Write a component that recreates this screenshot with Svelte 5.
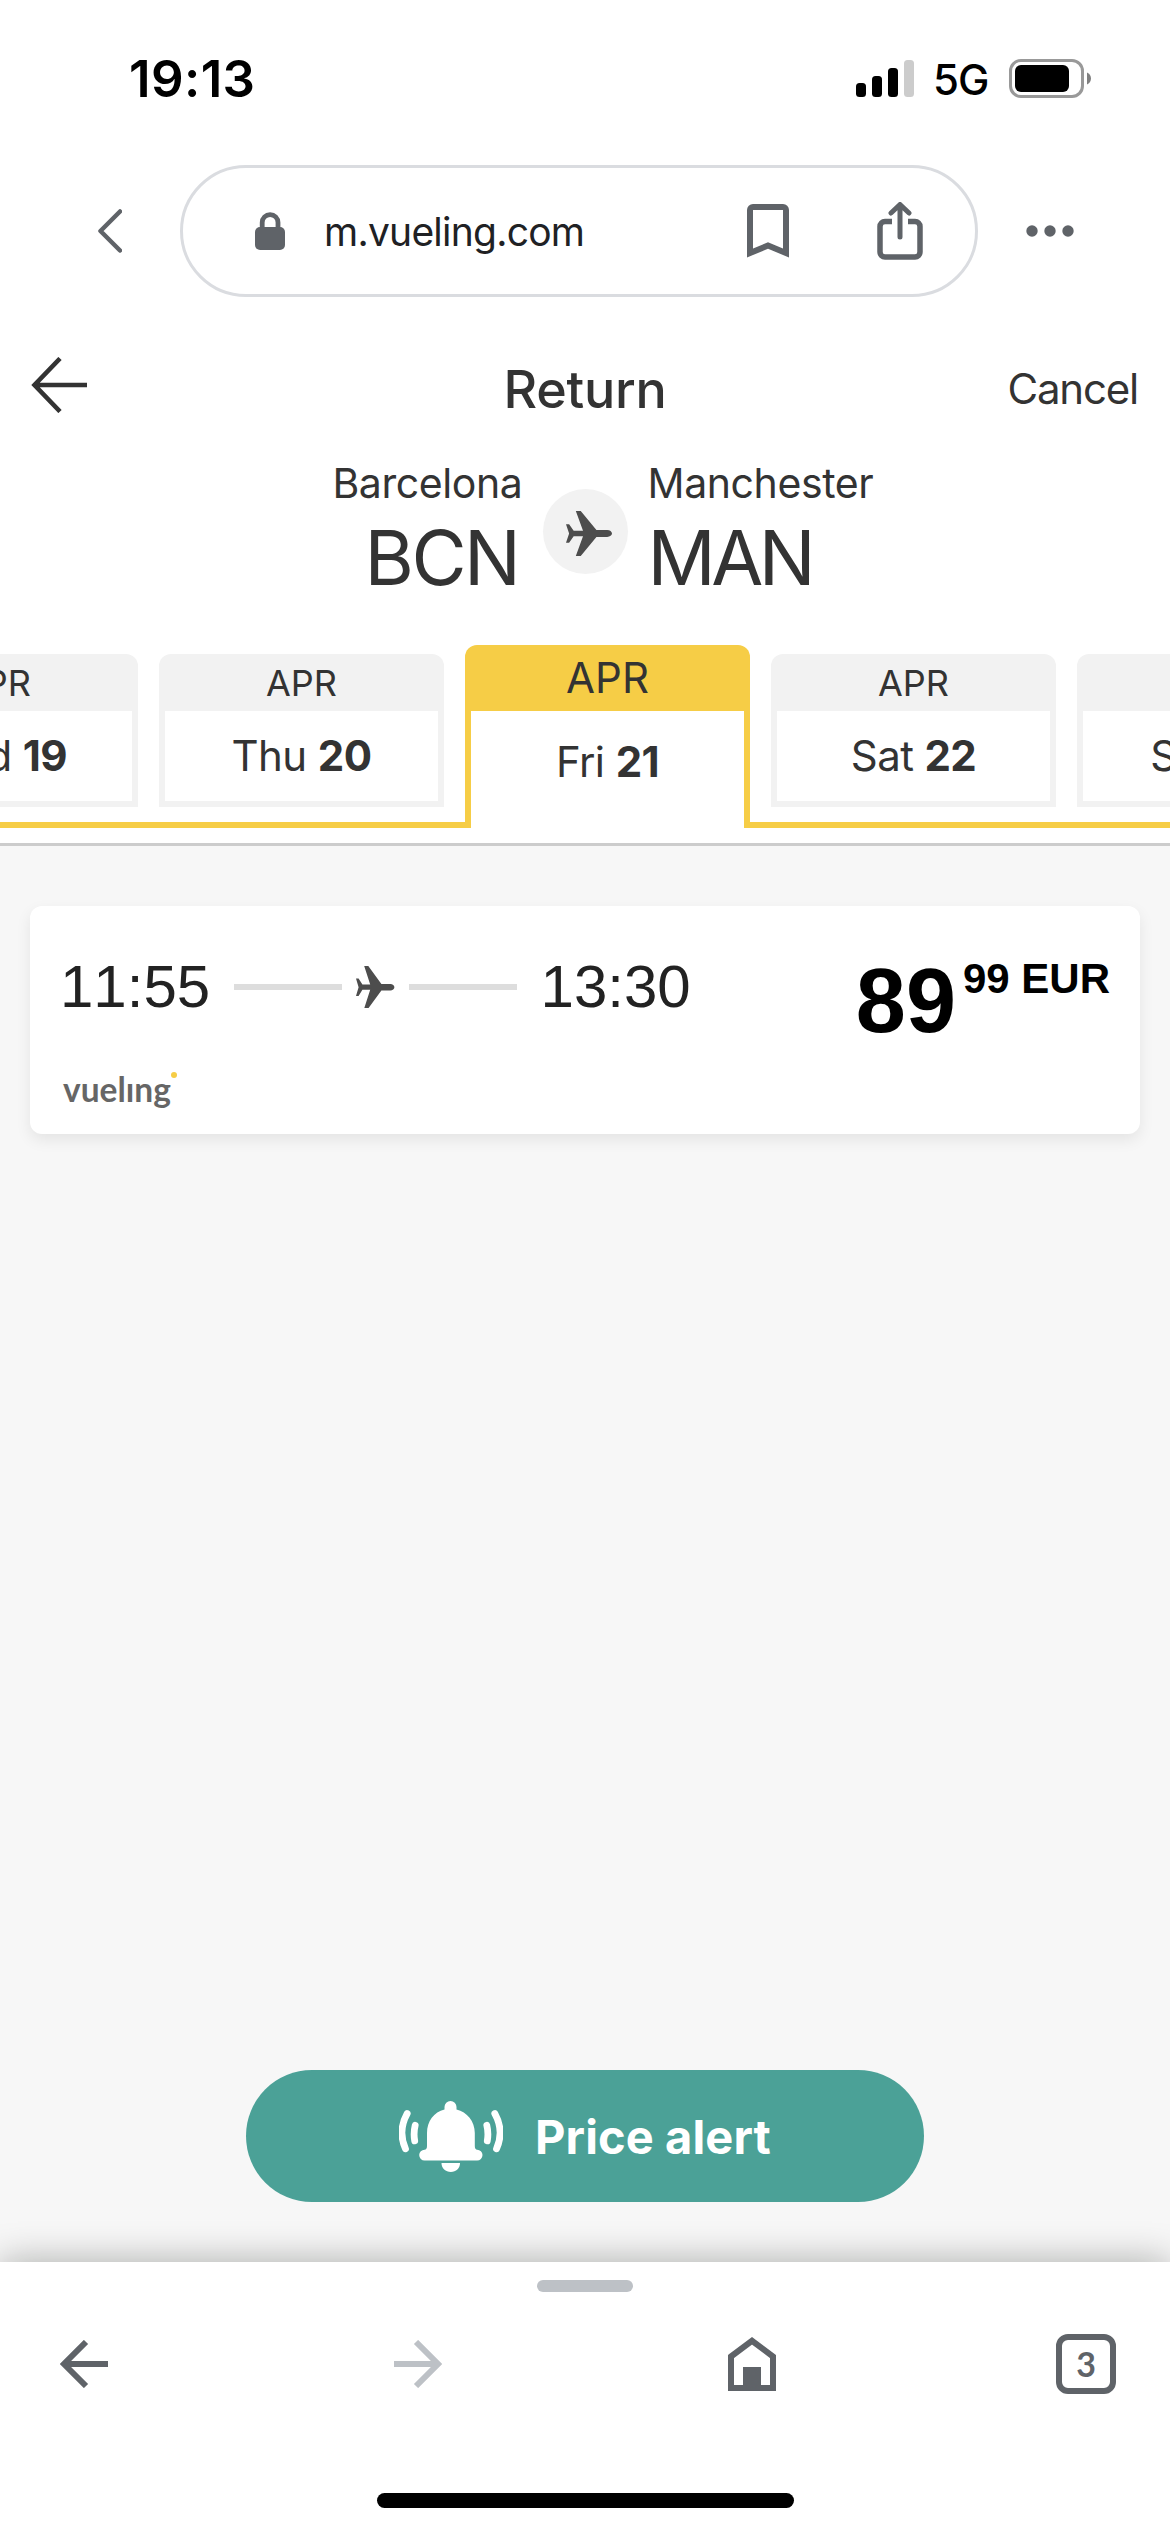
<script lang="ts">
	interface Day {
		month: string;
		weekday: string;
		date: number;
	}

	const days: Day[] = [
		{ month: 'APR', weekday: 'Wed', date: 19 },
		{ month: 'APR', weekday: 'Thu', date: 20 },
		{ month: 'APR', weekday: 'Fri', date: 21 },
		{ month: 'APR', weekday: 'Sat', date: 22 },
		{ month: 'APR', weekday: 'Sun', date: 23 }
	];

	let selected = $state(2);

	const flight = { departs: '11:55', arrives: '13:30', price: '89', cents: '99', currency: 'EUR' };
</script>

{#snippet plane()}
	<svg class="plane" viewBox="0 0 38.4 42.4" preserveAspectRatio="none">
		<path
			d="M8.2 0h4.1L25.4 18h9c2.2 0 4 1.6 4 3.2s-1.8 3.2-4 3.2h-9L12.3 42.4H8.2l6-18.6H6.4L2.6 30H0l2.6-8.8L0 12.4h2.6l3.8 6.2h7.8z"
		/>
	</svg>
{/snippet}

<div class="screen">
	<div class="status-bar">
		<span class="time">19:13</span>
		<div class="status-icons">
			<svg width="58" height="37" viewBox="0 0 58 37">
				<rect x="0" y="23" width="10" height="14" rx="3.5" />
				<rect x="16" y="16" width="10" height="21" rx="3.5" />
				<rect x="32" y="8" width="10" height="29" rx="3.5" />
				<rect x="48" y="0" width="10" height="37" rx="3.5" fill="#ccc" />
			</svg>
			<span class="network">5G</span>
			<svg width="82" height="39" viewBox="0 0 82 39">
				<rect x="1.5" y="1.5" width="72" height="36" rx="10.5" fill="none" stroke="#999" stroke-width="3" />
				<rect x="6" y="6" width="54" height="27" rx="6" />
				<path d="M78 13.5c2.3 1 4 3.3 4 6s-1.7 5-4 6z" fill="#808080" />
			</svg>
		</div>
	</div>

	<div class="browser-bar">
		<button class="chevron" aria-label="Back">
			<svg width="24" height="44" viewBox="0 0 24 44" fill="none" stroke="#5f6368" stroke-width="4.5" stroke-linecap="round" stroke-linejoin="round">
				<path d="M22 2.5L2.5 22 22 41.5" />
			</svg>
		</button>
		<div class="address">
			<svg width="30" height="38" viewBox="0 0 30 38">
				<path d="M7.2 18V10.5a7.9 7.9 0 0 1 15.8 0V18" fill="none" stroke="#5f6368" stroke-width="4.8" />
				<rect y="15" width="30" height="23" rx="5" fill="#5f6368" />
			</svg>
			<span class="url">m.vueling.com</span>
			<svg class="bookmark" width="42" height="54" viewBox="0 0 42 54" fill="none" stroke="#5f6368" stroke-width="6">
				<path d="M3 49V6a3 3 0 0 1 3-3h30a3 3 0 0 1 3 3v43L21 41.5z" />
			</svg>
			<svg width="46" height="58" viewBox="0 0 46 58" fill="none" stroke="#5f6368" stroke-width="5.5">
				<path d="M15 19.5H8a5 5 0 0 0-5 5V50a5 5 0 0 0 5 5h30a5 5 0 0 0 5-5V24.5a5 5 0 0 0-5-5h-7" />
				<path d="M23 35V3.5M14 11l9-8.5 9 8.5" stroke-width="5" stroke-linecap="round" stroke-linejoin="round" />
			</svg>
		</div>
		<button class="more" aria-label="More">
			<svg width="48" height="12" viewBox="0 0 48 12" fill="#5f6368">
				<circle cx="6" cy="6" r="5.7" />
				<circle cx="24" cy="6" r="5.7" />
				<circle cx="42" cy="6" r="5.7" />
			</svg>
		</button>
	</div>

	<header class="page-header">
		<button class="go-back" aria-label="Go back">
			<svg width="57" height="56" viewBox="0 0 57 56" fill="none" stroke="#333" stroke-width="4.6">
				<path d="M56 28H4M29 1.5L3.5 28 29 54.5" />
			</svg>
		</button>
		<h1>Return</h1>
		<button class="cancel">Cancel</button>
	</header>

	<section class="route">
		<div class="place from">
			<span class="city">Barcelona</span>
			<span class="code">BCN</span>
		</div>
		<div class="route-icon">{@render plane()}</div>
		<div class="place">
			<span class="city">Manchester</span>
			<span class="code">MAN</span>
		</div>
	</section>

	<nav class="days">
		<div class="days-track">
			{#each days as day, i}
				<button
					class="day"
					class:active={i === selected}
					class:after={i > selected}
					onclick={() => (selected = i)}
				>
					<span class="month">{day.month}</span>
					<span class="date">{day.weekday}&nbsp;<b>{day.date}</b></span>
				</button>
			{/each}
		</div>
	</nav>

	<main class="results">
		<article class="flight">
			<div class="journey">
				<div class="times">
					<span>{flight.departs}</span>
					<i class="line"></i>
					{@render plane()}
					<i class="line"></i>
					<span>{flight.arrives}</span>
				</div>
				<span class="airline">vuelıng</span>
			</div>
			<div class="price">
				<span class="amount">{flight.price}</span>
				<span class="cents">{flight.cents} {flight.currency}</span>
			</div>
		</article>

		<button class="price-alert">
			<svg width="104" height="71" viewBox="0 0 104 71" fill="#fff">
				<path
					d="M45.5 8.6V6a6 6 0 0 1 12 0v2.6C68 11 75.8 20.5 75.8 32v13c0 2.5 1 3.7 2.3 3.7a5.4 5.4 0 0 1 0 10.8H25.6a5.4 5.4 0 0 1 0-10.8C27 48.7 28 47.5 28 45V32c0-11.5 7-21 17.5-23.4z"
				/>
				<path d="M42.5 62H61c0 5.5-4 9-9.2 9s-9.3-3.5-9.3-9z" />
				<g fill="none" stroke="#fff" stroke-width="6.8" stroke-linecap="round">
					<path d="M8.2 12.5Q-1.5 30 6.5 47.8M16.2 24.2Q14.3 32 15.7 39.8" />
					<path d="M95.8 12.5Q105.5 30 97.5 47.8M87.8 24.2Q89.7 32 88.3 39.8" />
				</g>
			</svg>
			<span>Price alert</span>
		</button>
	</main>

	<footer class="toolbar">
		<div class="handle"></div>
		<div class="toolbar-icons">
			<svg width="48" height="48" viewBox="0 0 48 48" fill="none" stroke="#5f6368" stroke-width="6">
				<path d="M48 24H5M26 2L4 24l22 22" />
			</svg>
			<svg width="48" height="48" viewBox="0 0 48 48" fill="none" stroke="#bdc1c6" stroke-width="6">
				<path d="M0 24h43M22 2l22 22-22 22" />
			</svg>
			<svg width="48" height="54" viewBox="0 0 48 54">
				<path d="M3 19.5L24 3.8l21 15.7V51H3z" fill="none" stroke="#5f6368" stroke-width="6" />
				<path d="M15 30h18v24H15z" fill="#5f6368" />
			</svg>
			<span class="tab-count">3</span>
		</div>
		<div class="home-indicator"></div>
	</footer>
</div>

<style>
	:global(body) {
		margin: 0;
		background: #fff;
	}

	.screen {
		display: flex;
		flex-direction: column;
		width: 1170px;
		height: 2532px;
		overflow: hidden;
		background: #fff;
		color: #333;
		font-family: Inter, 'Liberation Sans', sans-serif;
	}

	button {
		padding: 0;
		border: 0;
		background: none;
		color: inherit;
		font: inherit;
	}

	svg {
		display: block;
		flex: none;
	}

	.status-bar {
		display: flex;
		align-items: center;
		justify-content: space-between;
		height: 156px;
		padding: 0 79px 0 129px;
		box-sizing: border-box;
		color: #000;
	}

	.time {
		font-size: 51px;
		font-weight: 600;
		letter-spacing: 0.4px;
	}

	.status-icons {
		display: flex;
		align-items: center;
	}

	.network {
		width: 54px;
		margin: 2px 22px 0 19px;
		font-size: 42px;
		font-weight: 500;
		letter-spacing: -1px;
	}

	.browser-bar {
		display: flex;
		align-items: center;
		height: 150px;
	}

	.chevron {
		padding-left: 98px;
		width: 180px;
		box-sizing: border-box;
	}

	.address {
		display: flex;
		align-items: center;
		width: 798px;
		height: 132px;
		padding: 0 52px 0 72px;
		box-sizing: border-box;
		border: 3px solid #dadce0;
		border-radius: 66px;
	}

	.url {
		flex: 1;
		margin-left: 39px;
		color: #202124;
		font-size: 39px;
		letter-spacing: -0.75px;
	}

	.bookmark {
		margin-right: 88px;
	}

	.more {
		margin-left: 48px;
	}

	.page-header {
		display: grid;
		grid-template-columns: 1fr auto 1fr;
		align-items: center;
		height: 144px;
		padding: 22px 31px 0;
		box-sizing: border-box;
	}

	.go-back {
		justify-self: start;
		margin-bottom: 8px;
	}

	h1 {
		margin: 0;
		font-size: 52px;
		font-weight: 500;
		letter-spacing: -0.3px;
	}

	.cancel {
		justify-self: end;
		margin: 0 1px 2px 0;
		font-size: 42px;
		letter-spacing: -1.2px;
	}

	.route {
		display: grid;
		grid-template-columns: 1fr 85px 1fr;
		column-gap: 20px;
		height: 195px;
	}

	.place {
		display: flex;
		flex-direction: column;
	}

	.from {
		align-items: flex-end;
	}

	.city {
		font-size: 41px;
		line-height: 66px;
		letter-spacing: -0.4px;
	}

	.code {
		font-size: 75.5px;
		line-height: 84px;
		letter-spacing: -4.5px;
	}

	.from .code {
		margin-right: 4px;
		letter-spacing: -2.5px;
	}

	.route-icon {
		display: flex;
		align-items: center;
		justify-content: center;
		height: 85px;
		margin-top: 39px;
		border-radius: 50%;
		background: #f2f2f2;
	}

	.plane {
		width: 38.4px;
		height: 42.4px;
		fill: #4d4d4d;
	}

	.route-icon .plane {
		width: 46px;
		height: 45px;
		margin: 4px 0 0 8px;
	}

	.days {
		height: 198px;
		overflow: hidden;
		border-bottom: 3px solid #ccc;
	}

	.days-track {
		display: flex;
		width: max-content;
		height: 183px;
		margin-left: -147px;
	}

	.day {
		display: flex;
		flex-direction: column;
		width: 306px;
		padding: 9px 21px 15px 0;
		box-sizing: border-box;
		border-bottom: 6px solid #f6cd46;
	}

	.day.after {
		padding: 9px 0 15px 21px;
	}

	.month {
		height: 57px;
		border-radius: 12px 12px 0 0;
		background: #f2f2f2;
		font-size: 36px;
		line-height: 58px;
		text-align: center;
	}

	.date {
		flex: 1;
		border: 6px solid #f2f2f2;
		border-top: 0;
		font-size: 42px;
		line-height: 90px;
		letter-spacing: -0.6px;
		text-align: center;
	}

	.day.active {
		width: 285px;
		padding: 0;
		border-bottom: 0;
	}

	.active .month {
		height: 66px;
		background: #f6cd46;
		font-size: 42px;
		line-height: 66px;
	}

	.active .date {
		border-color: #f6cd46;
		border-bottom: 0;
		line-height: 102px;
	}

	.results {
		display: flex;
		flex: 1;
		flex-direction: column;
		align-items: center;
		justify-content: space-between;
		padding: 60px 30px;
		background: #f7f7f7;
	}

	.flight {
		display: flex;
		justify-content: space-between;
		width: 100%;
		height: 228px;
		padding: 48px 30px 0;
		box-sizing: border-box;
		border-radius: 12px;
		background: #fff;
		box-shadow: 0 6px 15px rgba(0, 0, 0, 0.08);
		font-family: 'Liberation Sans', Arial, sans-serif;
	}

	.times {
		display: flex;
		align-items: center;
		color: #222;
		font-size: 60px;
		font-kerning: none;
		line-height: 66px;
	}

	.line {
		width: 108px;
		height: 6px;
		margin: 0 14px 0 24px;
		background: #ddd;
	}

	.plane + .line {
		margin: 0 24px 0 14px;
	}

	.airline {
		position: relative;
		display: inline-block;
		margin: 48px 0 0 3px;
		color: #666;
		font-family: Lato, sans-serif;
		font-size: 33.5px;
		font-weight: 700;
		line-height: 42px;
	}

	.airline::after {
		content: '';
		position: absolute;
		top: 4px;
		right: -6px;
		width: 6px;
		height: 6px;
		border-radius: 50%;
		background: #f6cd46;
	}

	.price {
		display: flex;
		align-items: flex-start;
		color: #000;
		font-weight: 700;
	}

	.amount {
		font-size: 90px;
		line-height: 94px;
	}

	.cents {
		margin-left: 7px;
		font-size: 42px;
		line-height: 50px;
	}

	.price-alert {
		display: flex;
		align-items: center;
		justify-content: center;
		gap: 32px;
		width: 678px;
		height: 132px;
		border-radius: 66px;
		background: #4ba197;
		color: #fff;
		font-size: 47px;
		font-weight: 700;
		letter-spacing: 0.1px;
	}

	.toolbar {
		display: flex;
		flex-direction: column;
		align-items: center;
		height: 270px;
		background: #fff;
		box-shadow: 0 0 36px rgba(0, 8, 4, 0.32);
	}

	.handle {
		width: 96px;
		height: 12px;
		margin-top: 18px;
		border-radius: 6px;
		background: #bdc1c6;
	}

	.toolbar-icons {
		display: flex;
		align-items: center;
		justify-content: space-between;
		width: 100%;
		height: 60px;
		margin-top: 42px;
		padding: 0 54px;
		box-sizing: border-box;
	}

	.toolbar-icons svg {
		margin: 0 6px;
	}

	.tab-count {
		width: 60px;
		height: 60px;
		box-sizing: border-box;
		border: 6px solid #5f6368;
		border-radius: 12px;
		color: #5f6368;
		font-family: Lato, sans-serif;
		font-size: 34px;
		font-weight: 700;
		line-height: 48px;
		text-align: center;
	}

	.home-indicator {
		width: 417px;
		height: 15px;
		margin-top: 99px;
		border-radius: 8px;
		background: #000;
	}
</style>
